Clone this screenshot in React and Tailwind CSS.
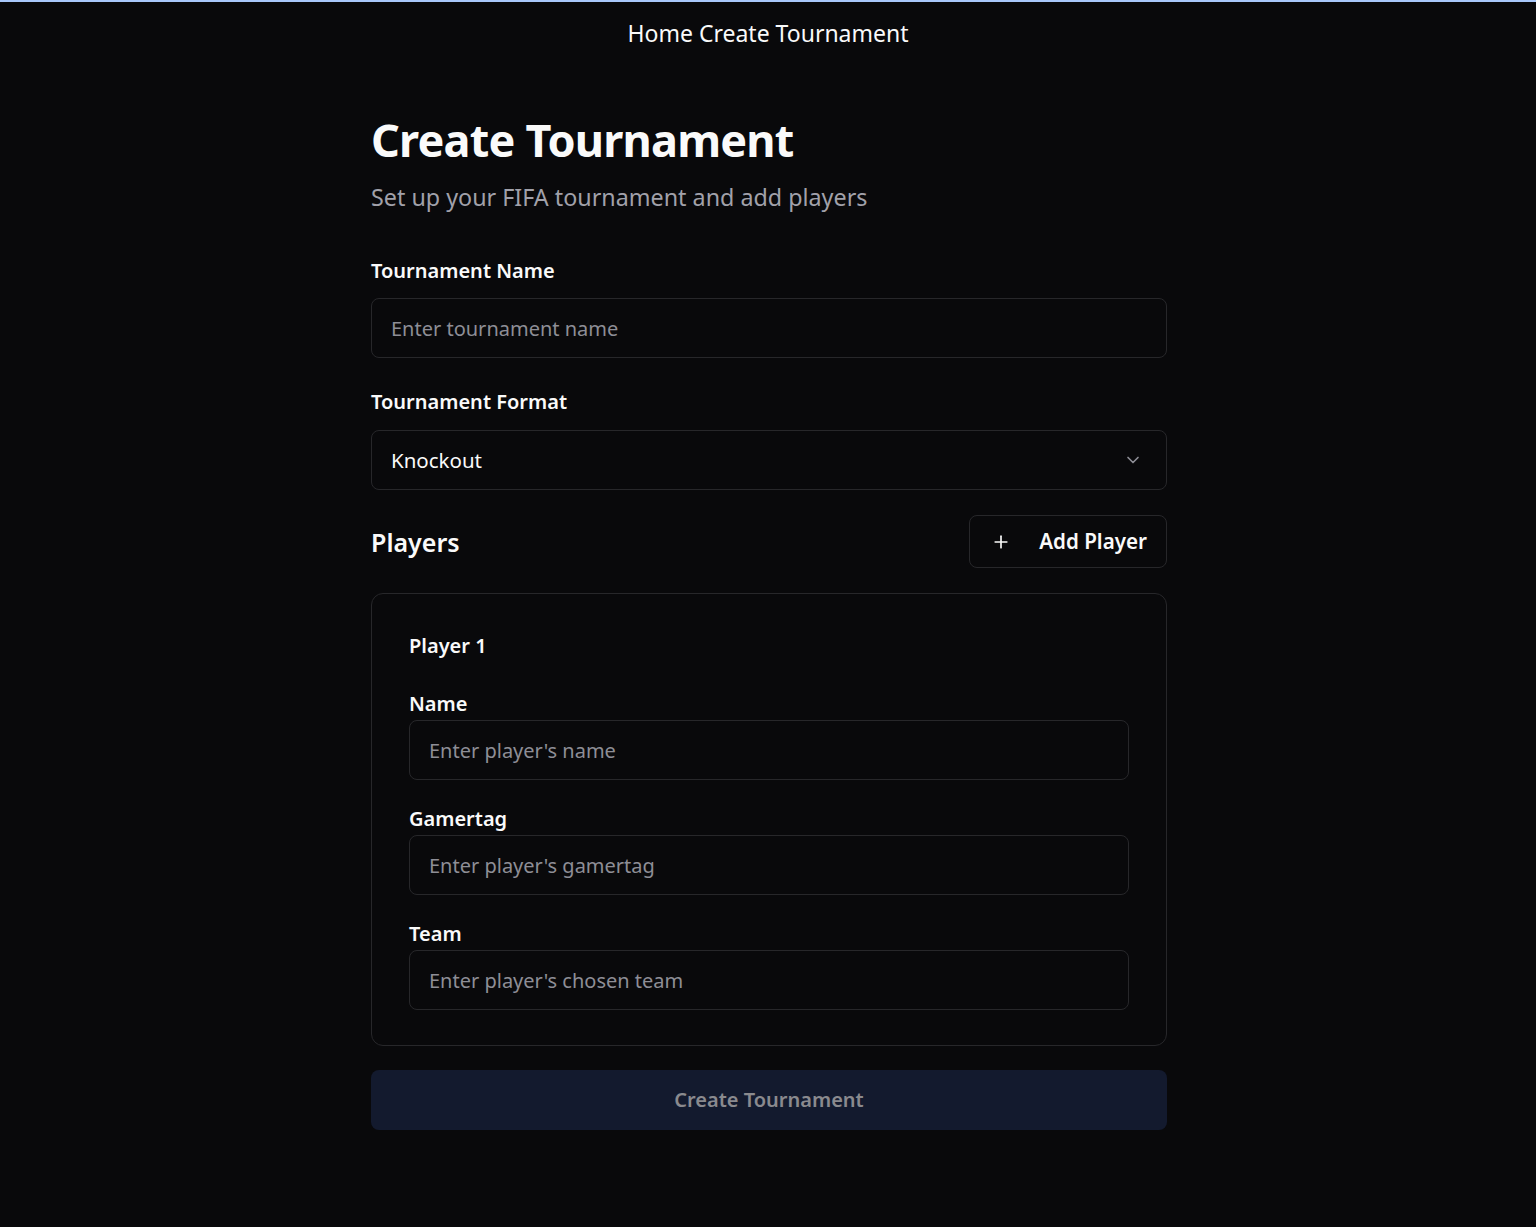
import React, { useState } from "react";

const font = { fontFamily: '"Noto Sans", "Open Sans", sans-serif' };

const Field = ({ label, placeholder }) => (
  <div>
    <label className="block text-[20px] leading-[24px] font-semibold text-[#fafafa] mb-[4px]">
      {label}
    </label>
    <input
      type="text"
      placeholder={placeholder}
      className="w-full h-[60px] px-[19px] text-[20px] bg-transparent border border-[#27272a] rounded-[8px] text-[#fafafa] placeholder:text-[#8e8e96] focus:outline-none"
    />
  </div>
);

export default function App() {
  const [format, setFormat] = useState("knockout");

  return (
    <div className="min-h-[1227px] bg-[#09090b] text-[#fafafa]" style={font}>
      <nav className="border-t-2 border-[#a8c7fa] pt-[16px] pb-[67px] text-center text-[23px] leading-[30px]">
        Home Create Tournament
      </nav>

      <main className="w-[798px] mx-auto pl-[2px]">
        <h1 className="text-[45px] leading-[50px] font-bold tracking-[-0.8px]">
          Create Tournament
        </h1>
        <p className="mt-[17px] text-[23.3px] leading-[30px] text-[#a1a1aa]">
          Set up your FIFA tournament and add players
        </p>

        <div className="mt-[45px]">
          <label className="block text-[20px] leading-[28px] font-semibold mb-[13px]">
            Tournament Name
          </label>
          <input
            type="text"
            placeholder="Enter tournament name"
            className="w-full h-[60px] px-[19px] text-[20px] bg-transparent border border-[#27272a] rounded-[8px] placeholder:text-[#8e8e96] focus:outline-none"
          />
        </div>

        <div className="mt-[30px]">
          <label className="block text-[20px] leading-[28px] font-semibold mb-[14px]">
            Tournament Format
          </label>
          <div className="relative">
            <select
              value={format}
              onChange={(e) => setFormat(e.target.value)}
              className="appearance-none w-full h-[60px] px-[19px] text-[20.5px] bg-transparent border border-[#27272a] rounded-[8px] text-[#fafafa] focus:outline-none"
            >
              <option value="knockout">Knockout</option>
              <option value="league">League</option>
            </select>
            <svg
              className="absolute right-[24px] top-1/2 -translate-y-1/2 pointer-events-none"
              width="20"
              height="20"
              viewBox="0 0 24 24"
              fill="none"
              stroke="#8e8e96"
              strokeWidth="2"
              strokeLinecap="round"
              strokeLinejoin="round"
            >
              <path d="m6 9 6 6 6-6" />
            </svg>
          </div>
        </div>

        <div className="mt-[25px] flex items-center justify-between">
          <h2 className="text-[25px] leading-[32px] font-semibold">Players</h2>
          <button className="h-[53px] flex items-center gap-[28px] pl-[21px] pr-[19px] border border-[#27272a] rounded-[8px] text-[20.6px] font-semibold">
            <svg
              width="20"
              height="20"
              viewBox="0 0 24 24"
              fill="none"
              stroke="currentColor"
              strokeWidth="2"
              strokeLinecap="round"
            >
              <path d="M5 12h14" />
              <path d="M12 5v14" />
            </svg>
            Add Player
          </button>
        </div>

        <div className="mt-[25px] border border-[#27272a] rounded-[12px] pt-[38px] pb-[35px] px-[37px]">
          <h3 className="text-[20px] leading-[28px] font-semibold">Player 1</h3>
          <div className="mt-[32px] flex flex-col gap-[27px]">
            <Field label="Name" placeholder="Enter player's name" />
            <Field label="Gamertag" placeholder="Enter player's gamertag" />
            <Field label="Team" placeholder="Enter player's chosen team" />
          </div>
        </div>

        <button
          disabled
          className="mt-[24px] w-full h-[60px] rounded-[8px] bg-[#131a2e] text-[#8a8a8e] text-[20px] font-semibold"
        >
          Create Tournament
        </button>
      </main>
    </div>
  );
}
